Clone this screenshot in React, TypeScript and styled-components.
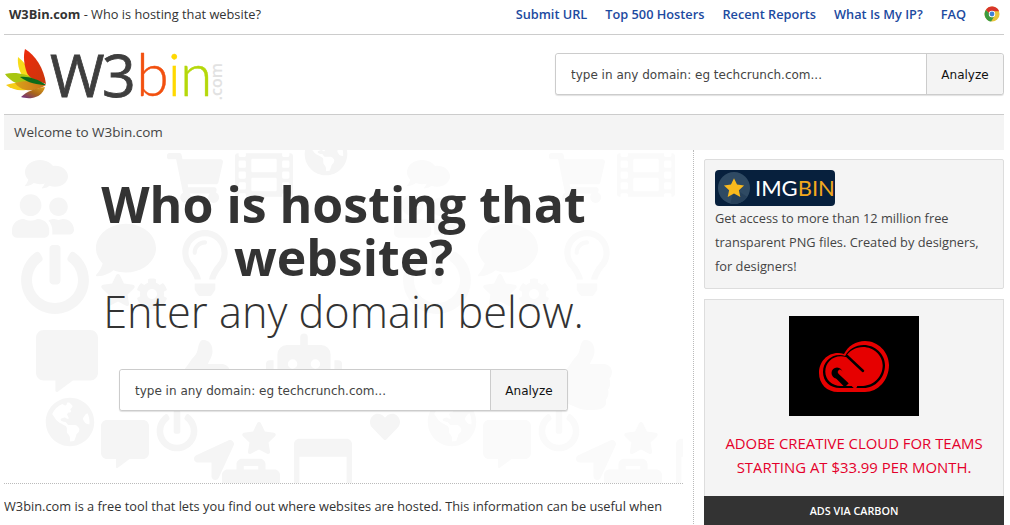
import React from 'react';
import styled, { createGlobalStyle } from 'styled-components';
import {
  FaBriefcase,
  FaCog,
  FaComment,
  FaCommentAlt,
  FaFilm,
  FaGlobeAmericas,
  FaHeart,
  FaLocationArrow,
  FaPowerOff,
  FaRegLightbulb,
  FaRegWindowMaximize,
  FaRobot,
  FaShoppingCart,
  FaStar,
  FaThumbsUp,
  FaUserFriends,
} from 'react-icons/fa';

const GlobalStyle = createGlobalStyle`
  html, body {
    margin: 0;
    padding: 0;
    background: #fff;
    overflow: hidden;
  }
  body {
    font-family: "Open Sans", "Noto Sans", sans-serif;
    color: #333;
  }
  * {
    box-sizing: border-box;
  }
`;

const Page = styled.div`
  width: 1000px;
  margin-left: 4px;
  height: 525px;
  overflow: hidden;
`;

const TopBar = styled.div`
  height: 35px;
  display: flex;
  align-items: center;
  justify-content: space-between;
  padding: 0 4px 7px 5px;
  border-bottom: 1px solid #ccc;
  font-size: 12.8px;
`;

const Tagline = styled.div`
  color: #333;
  b {
    font-weight: 700;
  }
`;

const Nav = styled.nav`
  display: flex;
  align-items: center;
  gap: 18px;
`;

const NavLink = styled.a`
  color: #1c4aa0;
  font-weight: 600;
  font-size: 12.75px;
`;

const Header = styled.header`
  height: 80px;
  display: flex;
  align-items: center;
  justify-content: space-between;
  padding-bottom: 2px;
  border-bottom: 1px solid #ccc;
`;

const Logo = styled.div`
  display: flex;
  align-items: center;
  height: 78px;
`;

const LogoMark = styled.svg`
  width: 47px;
  height: 60px;
  margin-left: -4px;
  margin-right: 3px;
  margin-top: 1px;
`;

const LogoW3 = styled.span`
  font-size: 59px;
  line-height: 60px;
  letter-spacing: -2.5px;
  color: #3e3e3e;
  -webkit-text-stroke: 0.8px #3e3e3e;
  margin-right: 3px;
`;

const LogoBin = styled.span<{ $color: string; $gap: number }>`
  font-family: "Lato", sans-serif;
  font-weight: 300;
  font-size: 59px;
  line-height: 60px;
  color: ${(p) => p.$color};
  -webkit-text-stroke: 0.4px ${(p) => p.$color};
  margin-right: ${(p) => p.$gap}px;
`;

const LogoCom = styled.span`
  writing-mode: vertical-rl;
  transform: rotate(180deg);
  font-size: 16px;
  line-height: 14px;
  font-weight: 600;
  color: #e2e2e2;
  margin-left: -3px;
  margin-top: 16px;
`;

const SearchForm = styled.form<{ $width: number }>`
  width: ${(p) => p.$width}px;
  height: 42px;
  display: flex;
  border: 1px solid #ccc;
  border-radius: 3px;
  box-shadow: 0 1px 1px rgba(0, 0, 0, 0.12);
  background: #fff;
`;

const SearchInput = styled.input`
  flex: 1;
  min-width: 0;
  border: 0;
  outline: 0;
  background: #fff;
  padding: 2px 15px 0;
  border-radius: 3px 0 0 3px;
  font-family: "DejaVu Sans", sans-serif;
  font-size: 12px;
  &::placeholder {
    color: #444;
    opacity: 1;
  }
`;

const SearchButton = styled.button`
  width: 77px;
  border: 0;
  border-left: 1px solid #ccc;
  border-radius: 0 3px 3px 0;
  background: #f4f4f4;
  color: #111;
  font-family: "DejaVu Sans", sans-serif;
  font-size: 12px;
  padding: 2px 0 0;
`;

const Welcome = styled.div`
  height: 35px;
  background: #f4f4f4;
  display: flex;
  align-items: center;
  padding: 0 0 2px 10px;
  font-size: 13.5px;
  color: #444;
`;

const Columns = styled.div`
  display: flex;
  height: 376px;
`;

const Main = styled.main`
  width: 690px;
  border-right: 1px dotted #bbb;
  padding-right: 10px;
`;

const Hero = styled.section`
  position: relative;
  height: 334px;
  border-bottom: 1px dotted #bbb;
  overflow: hidden;
  display: flex;
  flex-direction: column;
  align-items: center;
  padding-top: 28px;
`;

const Wallpaper = styled.svg`
  position: absolute;
  left: 0;
  top: 0;
  width: 680px;
  height: 334px;
`;

const Title = styled.h1`
  position: relative;
  width: 520px;
  margin: 0;
  text-align: center;
  font-size: 50px;
  line-height: 53px;
  font-weight: 700;
  color: #333;
`;

const Subtitle = styled.h2`
  position: relative;
  margin: 0 0 29px;
  font-size: 43.3px;
  line-height: 56px;
  font-weight: 300;
  color: #333;
`;

const HeroSearch = styled.div`
  position: relative;
`;

const Intro = styled.p`
  margin: 12px 0 0;
  font-size: 12.8px;
  line-height: 20px;
  color: #333;
  white-space: nowrap;
`;

const Sidebar = styled.aside`
  flex: 1;
  padding: 9px 0 0 10px;
  display: flex;
  flex-direction: column;
  gap: 10px;
`;

const Box = styled.div`
  border: 1px solid #ddd;
  border-radius: 2px;
  background: #f4f4f4;
`;

const PromoBox = styled(Box)`
  height: 130px;
  padding: 10px;
  font-size: 12.8px;
  line-height: 24px;
  color: #444;
`;

const ImgBin = styled.div`
  width: 120px;
  height: 36px;
  border-radius: 4px;
  background: #07203d;
  display: flex;
  align-items: center;
  padding-left: 3px;
  font-family: "Lato", sans-serif;
  font-size: 22px;
  line-height: 36px;
  color: #fff;
  svg {
    flex-shrink: 0;
    margin-right: 5px;
  }
  span {
    color: #f2a81d;
  }
`;

const AdBox = styled(Box)`
  flex: 1;
  border-radius: 0;
  display: flex;
  flex-direction: column;
  align-items: center;
  padding-top: 16px;
`;

const AdImage = styled.div`
  width: 130px;
  height: 100px;
  background: #000;
  display: flex;
  align-items: center;
  justify-content: center;
`;

const AdText = styled.div`
  margin-top: 15px;
  text-align: center;
  font-size: 14.9px;
  line-height: 24px;
  color: #e4002b;
`;

const AdFooter = styled.div`
  margin: auto -1px 0;
  align-self: stretch;
  height: 29px;
  background: #333;
  color: #fff;
  display: flex;
  align-items: center;
  justify-content: center;
  font-size: 10.8px;
  font-weight: 600;
`;

const navItems = ['Submit URL', 'Top 500 Hosters', 'Recent Reports', 'What Is My IP?', 'FAQ'];

const ChromeIcon = () => (
  <svg width="16" height="16" viewBox="0 0 18 18">
    <circle cx="9" cy="9" r="8.500" fill="#e8c43a" />
    <path d="M2 4.500A8.500 8.500 0 0 1 17 6H9a3.400 3.400 0 0 0-3.200 2.200Z" fill="#d8352b" />
    <path d="M2 4.500A8.500 8.500 0 0 0 8 17.500l3.400-5.800a3.400 3.400 0 0 1-5.600-3.500Z" fill="#3c9a3f" />
    <circle cx="9" cy="9" r="3.600" fill="#fff" />
    <circle cx="9" cy="9" r="2.700" fill="#3f80d8" />
  </svg>
);

const LeafMark = () => (
  <LogoMark viewBox="0 0 47 60">
    <defs>
      <linearGradient id="petalRed" x1="0" y1="0" x2="1" y2="1">
        <stop offset="0" stopColor="#ee2a0c" />
        <stop offset="1" stopColor="#c8380c" />
      </linearGradient>
      <linearGradient id="petalOrange" x1="0" y1="0" x2="1" y2="0">
        <stop offset="0" stopColor="#d8a21a" />
        <stop offset="1" stopColor="#c9701a" />
      </linearGradient>
      <linearGradient id="petalPurple" x1="0" y1="1" x2="1" y2="0">
        <stop offset="0" stopColor="#6b2a8c" />
        <stop offset="0.5" stopColor="#a8661c" />
        <stop offset="1" stopColor="#e0a018" />
      </linearGradient>
    </defs>
    <path d="M18 13C24 18 30 25 33 33L25 35C20 30 17 21 18 13Z" fill="#f7dc1a" />
    <path d="M5 30C14 28 26 29 36 36L24 41C16 40 9 36 5 30Z" fill="#a8c612" />
    <path d="M6 41C15 38 26 38 36 38L26 46C18 47 11 45 6 41Z" fill="#f5cc18" />
    <path d="M25 5C35 11 44 24 46 40C37 37 29 34 27 29C24 21 23 12 25 5Z" fill="url(#petalRed)" />
    <path d="M15 39C24 36 36 37 46 41C40 45 33 47 26 46C21 45 17 42 15 39Z" fill="url(#petalOrange)" />
    <path d="M20 33C28 32 38 35 46 41C38 41 28 39 20 33Z" fill="#0d6b1a" />
    <path d="M21 53C27 47 36 44 45 43C43 50 38 53 32 54C28 54.500 24 54 21 53Z" fill="url(#petalPurple)" />
  </LogoMark>
);

const cloudPath =
  'M19 51C8 51 0 43 0 32C0 21 8 12 19 12C21 12 23 12.500 25 13C29 5 37 0 46 0C59 0 70 11 70 24C70 39 59 51 46 51Z';

const CreativeCloud = () => (
  <svg width="70" height="51" viewBox="0 0 70 51">
    <path d={cloudPath} fill="#e60000" />
    <path d={cloudPath} fill="#000" transform="translate(35 25.5) scale(0.886 0.843) translate(-35 -25.5)" />
    <path d={cloudPath} fill="#e60000" transform="translate(35 25.5) scale(0.82 0.76) translate(-35 -25.5)" />
    <circle cx="18" cy="32" r="5.500" fill="#000" />
    <path d="M18 32L29 43" stroke="#000" strokeWidth="9" />
    <path d="M21 31L36 45" stroke="#e60000" strokeWidth="4.500" strokeLinecap="round" />
    <path d="M28 15L44 30" stroke="#000" strokeWidth="2.500" strokeLinecap="round" />
  </svg>
);

const ImgBinStar = () => (
  <svg width="32" height="32" viewBox="0 0 36 36">
    <circle cx="18" cy="18" r="18" fill="#2f4a63" />
    <path d="M18 18L33 28A18 18 0 0 1 14 35.500Z" fill="#26405a" />
    <path
      d="M18 7l3.400 7.200 7.900.9-5.800 5.300 1.600 7.800-7.100-4-7.100 4 1.600-7.800-5.800-5.300 7.900-.9Z"
      fill="#f9b91d"
    />
  </svg>
);

// one tile of the faint icon wallpaper, it repeats every 382px
const WallpaperTile = () => (
  <>
    <FaComment x="21" y="8" size="30" />
    <FaComment x="38" y="14" size="26" />
    <FaUserFriends x="8" y="35" size="62" />
    <FaPowerOff x="16" y="95" size="70" />
    <FaComment x="92" y="70" size="60" />
    <FaShoppingCart x="163" y="0" size="56" />
    <FaFilm x="231" y="-4" size="58" />
    <FaGlobeAmericas x="300" y="-18" size="44" />
    <FaRegLightbulb x="168" y="80" size="66" />
    <FaStar x="96" y="122" size="36" />
    <FaCog x="132" y="128" size="32" />
    <FaThumbsUp x="156" y="190" size="70" />
    <FaGlobeAmericas x="41" y="247" size="50" />
    <FaCommentAlt x="97" y="270" size="48" />
    <FaPowerOff x="152" y="260" size="42" />
    <FaStar x="237" y="270" size="36" />
    <FaLocationArrow x="190" y="290" size="40" />
    <FaBriefcase x="218" y="305" size="58" />
    <FaRegWindowMaximize x="290" y="285" size="58" />
    <FaHeart x="366" y="262" size="30" />
  </>
);

const Search = ({ width }: { width: number }) => (
  <SearchForm $width={width}>
    <SearchInput placeholder="type in any domain: eg techcrunch.com..." />
    <SearchButton type="button">Analyze</SearchButton>
  </SearchForm>
);

const App: React.FC = () => (
  <>
    <GlobalStyle />
    <Page>
      <TopBar>
        <Tagline>
          <b>W3Bin.com</b> - Who is hosting that website?
        </Tagline>
        <Nav>
          {navItems.map((item) => (
            <NavLink key={item}>{item}</NavLink>
          ))}
          <ChromeIcon />
        </Nav>
      </TopBar>
      <Header>
        <Logo>
          <LeafMark />
          <LogoW3>W3</LogoW3>
          <LogoBin $color="#f2500f" $gap={-1}>
            b
          </LogoBin>
          <LogoBin $color="#ffd800" $gap={-1}>
            i
          </LogoBin>
          <LogoBin $color="#b5d80a" $gap={0}>
            n
          </LogoBin>
          <LogoCom>.com</LogoCom>
        </Logo>
        <Search width={449} />
      </Header>
      <Welcome>Welcome to W3bin.com</Welcome>
      <Columns>
        <Main>
          <Hero>
            <Wallpaper viewBox="0 0 680 334">
              <g color="#f5f5f5">
                <WallpaperTile />
                <FaCommentAlt x="32" y="180" size="62" />
                <FaRobot x="262" y="176" size="76" />
              </g>
              <g color="#fafafa" transform="translate(382 0)">
                <WallpaperTile />
              </g>
            </Wallpaper>
            <Title>Who is hosting that website?</Title>
            <Subtitle>Enter any domain below.</Subtitle>
            <HeroSearch>
              <Search width={449} />
            </HeroSearch>
          </Hero>
          <Intro>
            W3bin.com is a free tool that lets you find out where websites are hosted. This information can be useful
            when
          </Intro>
        </Main>
        <Sidebar>
          <PromoBox>
            <ImgBin>
              <ImgBinStar />
              IMG<span>BIN</span>
            </ImgBin>
            Get access to more than 12 million free transparent PNG files. Created by designers, for designers!
          </PromoBox>
          <AdBox>
            <AdImage>
              <CreativeCloud />
            </AdImage>
            <AdText>
              ADOBE CREATIVE CLOUD FOR TEAMS
              <br />
              STARTING AT $33.99 PER MONTH.
            </AdText>
            <AdFooter>ADS VIA CARBON</AdFooter>
          </AdBox>
        </Sidebar>
      </Columns>
    </Page>
  </>
);

export default App;
